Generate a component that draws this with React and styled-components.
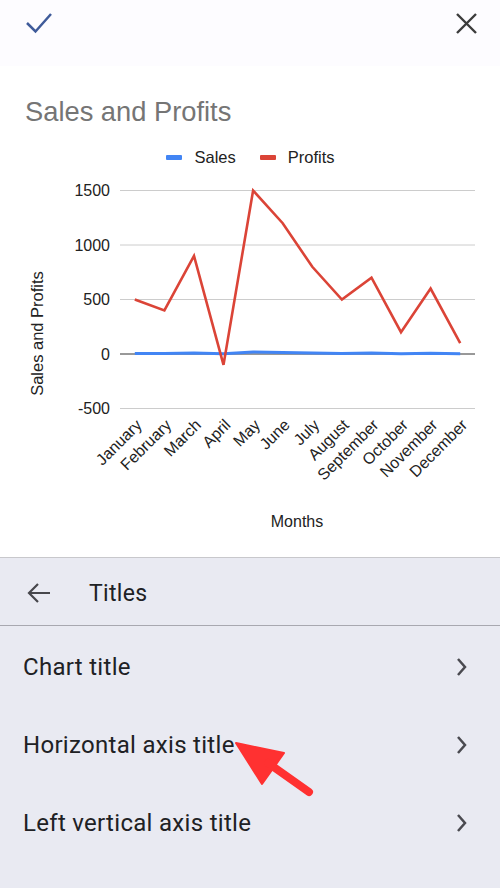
import React from 'react';
import styled, { createGlobalStyle } from 'styled-components';

const GlobalStyle = createGlobalStyle`
  html, body {
    margin: 0;
    padding: 0;
    background: #ffffff;
  }
  * {
    box-sizing: border-box;
  }
`;

const Screen = styled.div`
  position: relative;
  width: 500px;
  height: 888px;
  overflow: hidden;
  display: flex;
  flex-direction: column;
  background: #ffffff;
`;

const TopBar = styled.header`
  height: 66px;
  flex-shrink: 0;
  display: flex;
  justify-content: space-between;
  align-items: flex-start;
  padding: 12px 22px 0 25px;
  background: #fdfcff;
`;

const ChartArea = styled.section`
  height: 491px;
  flex-shrink: 0;
  display: flex;
  flex-direction: column;
  background: #ffffff;
  font-family: "Liberation Sans", Arial, sans-serif;
`;

const ChartTitle = styled.h1`
  margin: 30px 0 0 25px;
  font-size: 27.3px;
  line-height: 31px;
  font-weight: 400;
  color: #757575;
`;

const Legend = styled.div`
  margin-top: 20px;
  height: 20px;
  display: flex;
  justify-content: center;
  align-items: center;
  gap: 24px;
  padding-left: 1px;
`;

const LegendItem = styled.div`
  display: flex;
  align-items: center;
  gap: 12px;
  font-size: 16.5px;
  color: #222222;
`;

const Swatch = styled.span`
  width: 16px;
  height: 5px;
  border-radius: 1px;
  background: ${(p) => p.color};
`;

const Plot = styled.svg`
  display: block;
  margin-top: 3px;
  width: 500px;
  height: 387px;
  font-family: "Liberation Sans", Arial, sans-serif;
`;

const Panel = styled.section`
  flex: 1;
  display: flex;
  flex-direction: column;
  background: #e9eaf2;
  border-top: 1px solid #c8c8cc;
  font-family: Roboto, "Noto Sans", sans-serif;
  color: #202124;
`;

const PanelHeader = styled.div`
  height: 68px;
  display: flex;
  align-items: center;
  gap: 37px;
  padding: 3px 0 0 26px;
  border-bottom: 1px solid #a8a8b0;
  font-size: 23px;
  letter-spacing: 0.3px;
`;

const Row = styled.div`
  height: 78px;
  display: flex;
  align-items: center;
  justify-content: space-between;
  padding: 3px 32px 0 23px;
  font-size: 24px;
  letter-spacing: 0.3px;
`;

const Overlay = styled.svg`
  position: absolute;
  left: 0;
  top: 0;
  width: 500px;
  height: 888px;
  pointer-events: none;
`;

const months = [
  'January', 'February', 'March', 'April', 'May', 'June',
  'July', 'August', 'September', 'October', 'November', 'December',
];
const profits = [500, 400, 900, -100, 1500, 1200, 800, 500, 700, 200, 600, 100];
const sales = [5, 4, 10, 3, 18, 14, 9, 5, 8, 2, 6, 3];

const left = 120;
const right = 475;
const step = (right - left) / 12;
const xAt = (i) => left + (i + 0.5) * step;
const yAt = (v) => 354 - v * 0.109;

const toPoints = (arr) => arr.map((v, i) => `${xAt(i).toFixed(1)},${yAt(v).toFixed(1)}`).join(' ');

function LineChart() {
  const ticks = [1500, 1000, 500, 0, -500];
  return (
    <Plot viewBox="0 170 500 387">
      {ticks.map((t) => (
        <g key={t}>
          <line
            x1={left}
            x2={right}
            y1={yAt(t)}
            y2={yAt(t)}
            stroke={t === 0 ? '#333333' : '#cccccc'}
            strokeWidth="1"
          />
          <text x="110" y={yAt(t) + 5.7} textAnchor="end" fontSize="16" fill="#222222">
            {t}
          </text>
        </g>
      ))}
      <polyline points={toPoints(sales)} fill="none" stroke="#4285f4" strokeWidth="3" />
      <polyline points={toPoints(profits)} fill="none" stroke="#db4437" strokeWidth="2.6" />
      {months.map((m, i) => {
        const ax = xAt(i) + 8;
        const ay = 426;
        return (
          <text
            key={m}
            x={ax}
            y={ay}
            textAnchor="end"
            fontSize="16"
            fill="#222222"
            transform={`rotate(-45 ${ax} ${ay})`}
          >
            {m}
          </text>
        );
      })}
      <text x="297" y="527" textAnchor="middle" fontSize="16" fill="#222222">
        Months
      </text>
      <text
        x="43"
        y="333.5"
        textAnchor="middle"
        fontSize="16.5"
        fill="#222222"
        transform="rotate(-90 43 333.5)"
      >
        Sales and Profits
      </text>
    </Plot>
  );
}

const CheckIcon = () => (
  <svg width="28" height="22" viewBox="0 0 28 22">
    <path d="M2 11 L10.5 19.5 L26 2" fill="none" stroke="#3f5b9a" strokeWidth="2.5" />
  </svg>
);

const CloseIcon = () => (
  <svg width="23" height="23" viewBox="0 0 23 23">
    <path d="M2 2 L21 21 M21 2 L2 21" fill="none" stroke="#3c3c3c" strokeWidth="2.4" />
  </svg>
);

const BackIcon = () => (
  <svg width="26" height="24" viewBox="0 0 26 24">
    <path d="M24 12 H3 M12 3 L3 12 L12 21" fill="none" stroke="#47474c" strokeWidth="2.2" />
  </svg>
);

const Chevron = () => (
  <svg width="12" height="20" viewBox="0 0 12 20">
    <path d="M2 2 L9 10 L2 18" fill="none" stroke="#4a4a50" strokeWidth="2.5" />
  </svg>
);

export default function App() {
  return (
    <Screen>
      <GlobalStyle />
      <TopBar>
        <CheckIcon />
        <CloseIcon />
      </TopBar>
      <ChartArea>
        <ChartTitle>Sales and Profits</ChartTitle>
        <Legend>
          <LegendItem>
            <Swatch color="#4285f4" />
            Sales
          </LegendItem>
          <LegendItem>
            <Swatch color="#db4437" />
            Profits
          </LegendItem>
        </Legend>
        <LineChart />
      </ChartArea>
      <Panel>
        <PanelHeader>
          <BackIcon />
          Titles
        </PanelHeader>
        {['Chart title', 'Horizontal axis title', 'Left vertical axis title'].map((label) => (
          <Row key={label}>
            {label}
            <Chevron />
          </Row>
        ))}
      </Panel>
      <Overlay viewBox="0 0 500 888">
        <polygon points="236,743 284,753 262,784" fill="#ff3131" stroke="#ff3131" strokeWidth="2" strokeLinejoin="round" />
        <line x1="268" y1="763" x2="309" y2="792" stroke="#ff3131" strokeWidth="8" strokeLinecap="round" />
      </Overlay>
    </Screen>
  );
}
